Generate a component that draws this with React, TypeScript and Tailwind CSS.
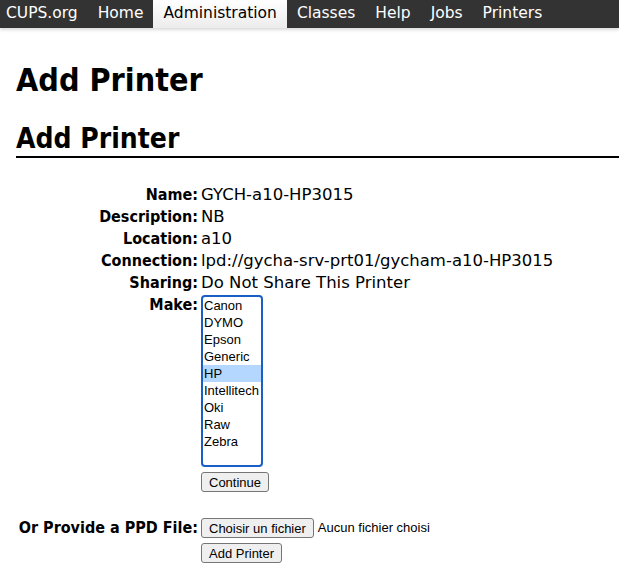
import React from 'react';

const navItems = ['CUPS.org', 'Home', 'Administration', 'Classes', 'Help', 'Jobs', 'Printers'];
const makes = ['Canon', 'DYMO', 'Epson', 'Generic', 'HP', 'Intellitech', 'Oki', 'Raw', 'Zebra'];

const info: Array<[string, string]> = [
  ['Name:', 'GYCH-a10-HP3015'],
  ['Description:', 'NB'],
  ['Location:', 'a10'],
  ['Connection:', 'lpd://gycha-srv-prt01/gycham-a10-HP3015'],
  ['Sharing:', 'Do Not Share This Printer'],
];

function Button({ children }: { children: React.ReactNode }) {
  return (
    <span className="inline-flex h-[20px] items-center rounded-[3px] border border-[#767676] bg-[#efefef] px-[7px] font-['Liberation_Sans',Arial,sans-serif] text-[13px] leading-none text-black">
      {children}
    </span>
  );
}

function Label({ children, className = '' }: { children: React.ReactNode; className?: string }) {
  return (
    <div
      className={`flex justify-end whitespace-nowrap font-['DejaVu_Sans_Condensed','DejaVu_Sans',sans-serif] font-bold ${className}`}
    >
      {children}
    </div>
  );
}

export default function App() {
  return (
    <div className="min-h-[577px] bg-white font-['DejaVu_Sans',sans-serif] text-black">
      <div className="flex h-[28px] items-stretch bg-[#333333] text-[15.5px] shadow-[0_2px_3px_rgba(0,0,0,0.15)]">
        {navItems.map((item, i) => (
          <span
            key={item}
            className={
              item === 'Administration'
                ? 'flex items-center bg-gradient-to-b from-white to-[#ececec] px-[10px] text-black'
                : i === 0
                  ? 'flex items-center pl-[6px] pr-[10px] text-white'
                  : 'flex items-center px-[10px] text-white'
            }
          >
            {item}
          </span>
        ))}
      </div>

      <div className="pl-[16px] font-['DejaVu_Sans_Condensed','DejaVu_Sans',sans-serif]">
        <h1 className="mt-[33px] text-[32px] font-bold leading-[38px]">Add Printer</h1>
        <h2 className="mt-[24px] border-b-2 border-black pb-[1px] text-[28px] font-bold leading-[32px]">
          Add Printer
        </h2>
      </div>

      <div className="mt-[26px] grid grid-cols-[198px_1fr] gap-x-[3px] text-[16px] leading-[22px]">
        {info.map(([label, value]) => (
          <React.Fragment key={label}>
            <Label>{label}</Label>
            <div className="whitespace-nowrap text-[16.5px]">{value}</div>
          </React.Fragment>
        ))}

        <Label>Make:</Label>
        <div>
          <div className="mt-[1px] h-[172px] w-[62px] rounded-[4px] border-2 border-[#1a5fc8] font-['Liberation_Sans',Arial,sans-serif] text-[13px] leading-[17px]">
            {makes.map((m) => (
              <div key={m} className={m === 'HP' ? 'bg-[#b3d7ff] pl-[1px]' : 'pl-[1px]'}>
                {m}
              </div>
            ))}
          </div>
          <div className="mt-[5px] flex">
            <Button>Continue</Button>
          </div>
        </div>

        <Label className="mt-[25px]">Or Provide a PPD File:</Label>
        <div className="mt-[25px] flex items-center gap-[4px]">
          <Button>Choisir un fichier</Button>
          <span className="font-['Liberation_Sans',Arial,sans-serif] text-[13px]">Aucun fichier choisi</span>
        </div>
        <div />
        <div className="mt-[4px] flex">
          <Button>Add Printer</Button>
        </div>
      </div>
    </div>
  );
}
